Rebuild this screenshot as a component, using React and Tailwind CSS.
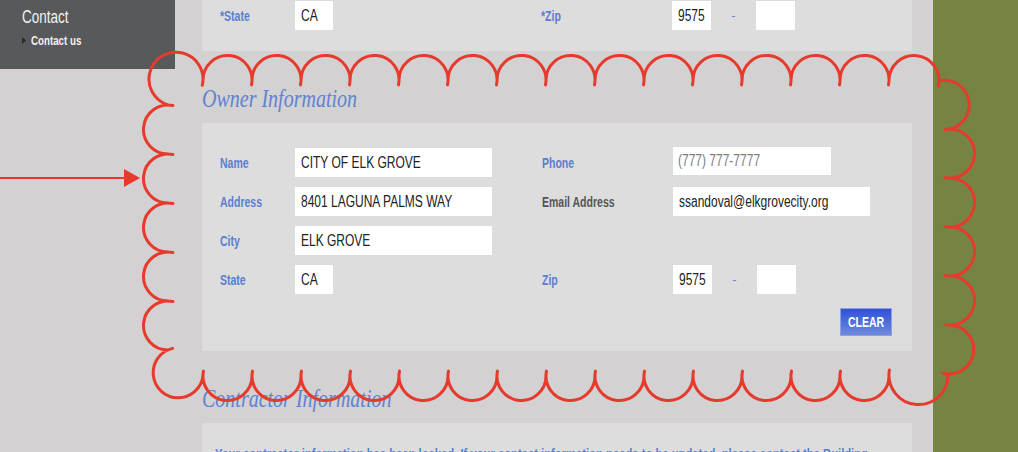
import React from "react";

// Cusp points of the revision cloud, clockwise from the top-left corner.
function cloudPoints() {
  const pts = [];
  for (let k = 0; k <= 14; k++) pts.push([203 + 49 * k, 80]);
  pts.push([939, 81]);
  for (let y = 129; y <= 325; y += 49) pts.push([950, y]);
  pts.push([948, 374]);
  for (let k = 14; k >= 0; k--) pts.push([203 + 49 * k, 376]);
  for (let y = 350; y >= 105; y -= 49) pts.push([168, y]);
  return pts;
}

// One scallop from p to q, bulging outward, with a small overshoot past q.
function scallop([px, py], [qx, qy], rMin = 0) {
  const dx = qx - px;
  const dy = qy - py;
  const c = Math.hypot(dx, dy);
  const r = Math.max(rMin, c / 2);
  const nx = dy / c;
  const ny = -dx / c;
  const h = Math.sqrt(Math.max(r * r - (c * c) / 4, 0));
  const cx = (px + qx) / 2 + nx * h;
  const cy = (py + qy) / 2 + ny * h;
  const a0 = Math.atan2(py - cy, px - cx);
  const a1 = Math.atan2(qy - cy, qx - cx);
  const sweep = (a1 - a0 + 4 * Math.PI) % (2 * Math.PI);
  const tail = 0.2;
  const end = a0 + sweep + tail;
  const ex = cx + r * Math.cos(end);
  const ey = cy + r * Math.sin(end);
  const large = sweep + tail > Math.PI ? 1 : 0;
  return `M${px} ${py}A${r.toFixed(2)} ${r.toFixed(2)} 0 ${large} 1 ${ex.toFixed(1)} ${ey.toFixed(1)}`;
}

function cloudPath() {
  const pts = cloudPoints();
  const parts = [];
  for (let i = 0; i < pts.length; i++) {
    const p = pts[i];
    const q = pts[(i + 1) % pts.length];
    let r = 0;
    if (p[0] === 168 && p[1] === 105) r = 27; // top-left corner
    if (p[0] === 203 && p[1] === 376) r = 25; // bottom-left corner
    parts.push(scallop(p, q, r));
  }
  return parts.join("");
}

// The site's type is condensed; squeeze the regular face to match.
function Narrow({ children, className = "" }) {
  return <span className={`inline-block origin-left scale-x-[0.75] whitespace-nowrap ${className}`}>{children}</span>;
}

function Label({ children, dark }) {
  return (
    <Narrow className={dark ? "text-[14px] font-bold text-[#555555]" : "text-[14px] font-bold text-[#5a7ed0]"}>
      {children}
    </Narrow>
  );
}

function Field({ value, placeholder, className }) {
  return (
    <div className={`${className} bg-white pl-[6px] flex items-center overflow-hidden`}>
      {value ? (
        <Narrow className="text-[16px] text-[#222222]">{value}</Narrow>
      ) : placeholder ? (
        <Narrow className="text-[16px] text-[#7d7d7d] -ml-px">{placeholder}</Narrow>
      ) : null}
    </div>
  );
}

function Heading({ children }) {
  return (
    <div className="h-[72px] pt-[33px]">
      <h2 className="inline-block origin-left scale-x-[0.8] whitespace-nowrap font-['Liberation_Serif',serif] italic text-[25px] leading-[30px] text-[#5f82d1]">
        {children}
      </h2>
    </div>
  );
}

function ZipRow({ label }) {
  return (
    <div className="flex items-center">
      <div className="w-[131px]">
        <Label>{label}</Label>
      </div>
      <Field value="9575" className="w-[39px] h-[29px]" />
      <span className="w-[45px] text-center text-[13px] text-[#6b86c9]">-</span>
      <Field className="w-[39px] h-[29px]" />
    </div>
  );
}

export default function App() {
  return (
    <div className="relative w-[1018px] h-[452px] overflow-hidden flex bg-[#d3d1d2] font-['Liberation_Sans',Arial,sans-serif]">
      <aside className="w-[175px] shrink-0">
        <div className="h-[69px] bg-[#58595b] pl-[22px] pt-[7px]">
          <div className="leading-[20px]">
            <Narrow className="text-[18px] text-[#f2f2f2]">Contact</Narrow>
          </div>
          <div className="mt-[5px] flex items-center gap-[5px] leading-[15px]">
            <svg width="4" height="7" viewBox="0 0 4 7">
              <polygon points="0,0 4,3.5 0,7" fill="#2b2b2b" />
            </svg>
            <Narrow className="text-[13px] font-bold text-[#f2f2f2]">Contact us</Narrow>
          </div>
        </div>
      </aside>

      <main className="ml-[27px] w-[710px] shrink-0">
        {/* tail of the previous section */}
        <div className="h-[51px] bg-[#dddddd] pt-px">
          <div className="flex items-center h-[29px]">
            <div className="w-[339px] flex items-center">
              <div className="w-[93px] pl-[18px]">
                <Label>*State</Label>
              </div>
              <Field value="CA" className="w-[38px] h-[29px]" />
            </div>
            <ZipRow label="*Zip" />
          </div>
        </div>

        <Heading>Owner Information</Heading>

        <section className="h-[228px] bg-[#dddddd] pt-[25px]">
          <div className="flex flex-col gap-[10px]">
            <div className="flex items-center h-[29px]">
              <div className="w-[340px] flex items-center">
                <div className="w-[93px] pl-[18px]">
                  <Label>Name</Label>
                </div>
                <Field value="CITY OF ELK GROVE" className="w-[197px] h-[29px]" />
              </div>
              <div className="flex items-center">
                <div className="w-[131px]">
                  <Label>Phone</Label>
                </div>
                <Field placeholder="(777) 777-7777" className="w-[158px] h-[28px] mb-[4px]" />
              </div>
            </div>
            <div className="flex items-center h-[29px]">
              <div className="w-[340px] flex items-center">
                <div className="w-[93px] pl-[18px]">
                  <Label>Address</Label>
                </div>
                <Field value="8401 LAGUNA PALMS WAY" className="w-[197px] h-[29px]" />
              </div>
              <div className="flex items-center">
                <div className="w-[131px]">
                  <Label dark>Email Address</Label>
                </div>
                <Field value="ssandoval@elkgrovecity.org" className="w-[197px] h-[29px]" />
              </div>
            </div>
            <div className="flex items-center h-[29px]">
              <div className="w-[93px] pl-[18px]">
                <Label>City</Label>
              </div>
              <Field value="ELK GROVE" className="w-[197px] h-[29px]" />
            </div>
            <div className="flex items-center h-[29px]">
              <div className="w-[340px] flex items-center">
                <div className="w-[93px] pl-[18px]">
                  <Label>State</Label>
                </div>
                <Field value="CA" className="w-[38px] h-[29px]" />
              </div>
              <ZipRow label="Zip" />
            </div>
          </div>
          <div className="mt-[14px] flex justify-end pr-[20px]">
            <button className="w-[52px] h-[28px] border border-[#8c9fe0] bg-gradient-to-b from-[#3150d6] to-[#6f89dd] flex items-center justify-center">
              <span className="inline-block scale-x-[0.75] text-[14px] font-bold text-white">CLEAR</span>
            </button>
          </div>
        </section>

        <Heading>Contractor Information</Heading>

        <section className="h-[60px] bg-[#dddddd] pt-[19px] pl-[13px]">
          <Narrow className="text-[15px] font-bold text-[#5a7ed0]">
            Your contractor information has been locked. If your contact information needs to be updated, please contact the Building
          </Narrow>
        </section>
      </main>

      <div className="ml-[21px] flex-1 bg-[#758443]" />

      {/* revision markup drawn on top */}
      <svg className="absolute inset-0 pointer-events-none" width="1018" height="452" viewBox="0 0 1018 452">
        <path d={cloudPath()} fill="none" stroke="#e63a2c" strokeWidth="3" strokeLinecap="round" />
        <line x1="0" y1="178" x2="126" y2="178" stroke="#e63a2c" strokeWidth="2" />
        <polygon points="124,169 140,178 124,187" fill="#e63a2c" />
      </svg>
    </div>
  );
}
